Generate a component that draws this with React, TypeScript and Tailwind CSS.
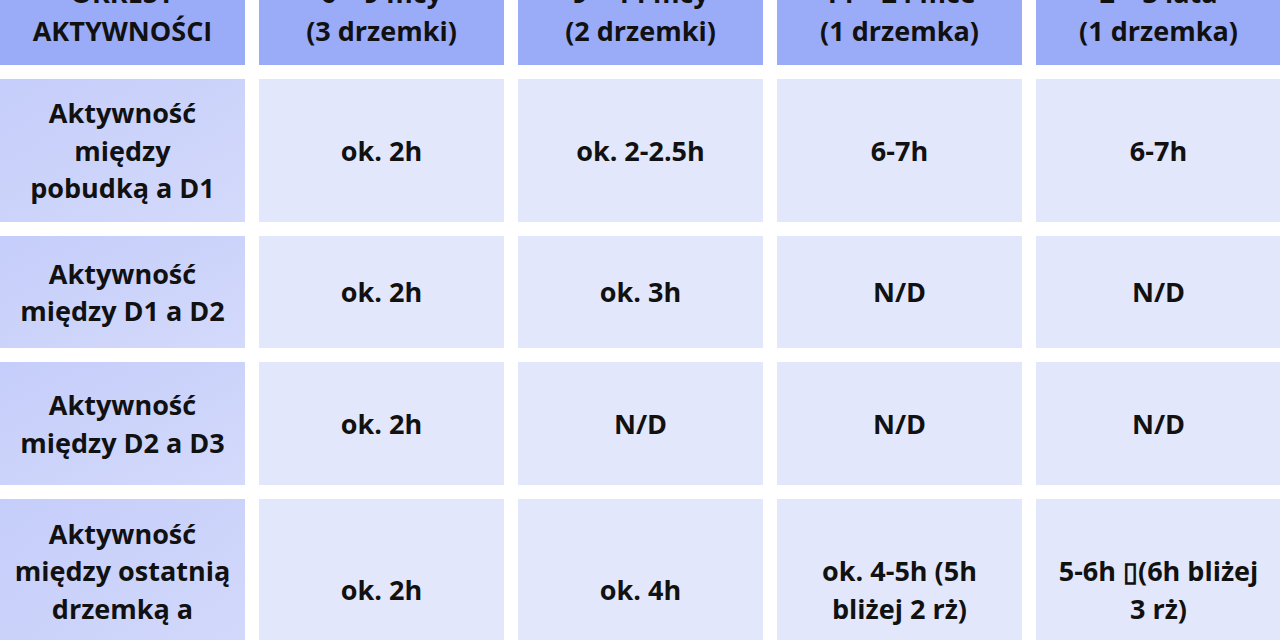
import React from "react";

const header = [
  ["OKRESY", "AKTYWNOŚCI"],
  ["6 – 9 mcy", "(3 drzemki)"],
  ["9 – 14 mcy", "(2 drzemki)"],
  ["14 – 24 mce", "(1 drzemka)"],
  ["2 – 3 lata", "(1 drzemka)"],
];

const rows = [
  {
    h: "h-[143px]",
    label: ["Aktywność", "między", "pobudką a D1"],
    cells: [["ok. 2h"], ["ok. 2-2.5h"], ["6-7h"], ["6-7h"]],
  },
  {
    h: "h-[112px]",
    label: ["Aktywność", "między D1 a D2"],
    cells: [["ok. 2h"], ["ok. 3h"], ["N/D"], ["N/D"]],
  },
  {
    h: "h-[123px]",
    label: ["Aktywność", "między D2 a D3"],
    cells: [["ok. 2h"], ["N/D"], ["N/D"], ["N/D"]],
  },
  {
    h: "h-[181px]",
    label: ["Aktywność", "między ostatnią", "drzemką a", "snem nocnym"],
    cells: [["ok. 2h"], ["ok. 4h"], ["ok. 4-5h (5h", "bliżej 2 rż)"], ["5-6h ▯(6h bliżej", "3 rż)"]],
  },
];

const Lines = ({ lines }: { lines: string[] }) => (
  <>
    {lines.map((l, i) => (
      <span key={i} className="block whitespace-nowrap">
        {l}
      </span>
    ))}
  </>
);

export default function App() {
  return (
    <div className="w-[1280px] h-[640px] overflow-hidden bg-white">
      <div
        className="-mt-[38px] grid grid-cols-5 gap-[14px] w-[1281px] text-[#111] font-bold text-[27px] leading-[37.5px] text-center"
        style={{ fontFamily: '"Open Sans", "Noto Sans", sans-serif' }}
      >
        {header.map((h, i) => (
          <div key={i} className="h-[103px] pb-1 bg-[#9aabf8] flex flex-col items-center justify-center">
            <Lines lines={h} />
          </div>
        ))}
        {rows.map((r, ri) => (
          <React.Fragment key={ri}>
            <div className={`${r.h} bg-gradient-to-br from-[#c5cdfa] to-[#d4dafb] flex flex-col items-center justify-center`}>
              <Lines lines={r.label} />
            </div>
            {r.cells.map((c, ci) => (
              <div key={ci} className={`${r.h} bg-[#e2e7fb] flex flex-col items-center justify-center`}>
                <Lines lines={c} />
              </div>
            ))}
          </React.Fragment>
        ))}
      </div>
    </div>
  );
}
